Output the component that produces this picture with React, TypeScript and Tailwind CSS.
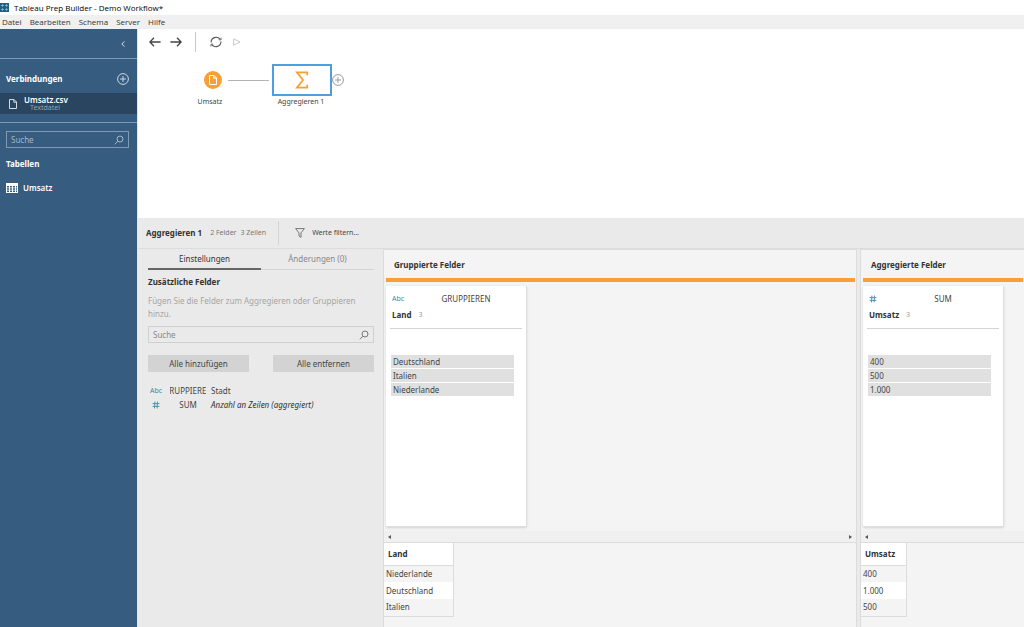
import React from "react";

type FieldPanelProps = {
  title: string;
  field: string;
  kind: "text" | "number";
  mode: string;
  values: string[];
  preview: string[];
  scrollEnd?: boolean;
  tableClass: string;
  className: string;
};

const SearchIcon = ({ className }: { className: string }) => (
  <svg viewBox="0 0 10 10" className={className} fill="none" stroke="currentColor" strokeWidth="1">
    <circle cx="6" cy="4" r="3" />
    <path d="M3.9 6.2 0.8 9.3" />
  </svg>
);

const FileIcon = ({ className }: { className: string }) => (
  <svg viewBox="0 0 8 10" className={className} fill="none" stroke="currentColor" strokeWidth="1">
    <path d="M0.5 0.5h4.5l2.5 2.5v6.5h-7zM4.8 0.5v2.7h2.7" />
  </svg>
);

const PlusCircle = ({ className }: { className: string }) => (
  <svg viewBox="0 0 12 12" className={className} fill="none" stroke="currentColor" strokeWidth="1">
    <circle cx="6" cy="6" r="5.4" />
    <path d="M6 3v6M3 6h6" />
  </svg>
);

const HashIcon = () => (
  <svg viewBox="0 0 8 8" className="size-2 text-[#4f93b0]" fill="none" stroke="currentColor" strokeWidth="1">
    <path d="M2.9 0.6 2.5 7.4M5.5 0.6 5.1 7.4M0.6 2.6h6.8M0.6 5.4h6.8" />
  </svg>
);

const TypeIcon = ({ kind }: { kind: "text" | "number" }) =>
  kind === "text" ? <span className="text-[7px] text-[#3f86a8]">Abc</span> : <HashIcon />;

const LogoIcon = () => (
  <svg viewBox="0 0 9 9" className="size-[9px]">
    <rect width="9" height="9" fill="#1f5f86" />
    <path
      d="M1 2.5h3M2.5 1v3M5 2.5h3M6.5 1v3M1 6.5h3M2.5 5v3M5 6.5h3M6.5 5v3"
      stroke="#8fbdd2"
      strokeWidth="0.7"
    />
  </svg>
);

function TitleBar() {
  return (
    <header className="font-['Open_Sans',sans-serif]">
      <div className="flex h-[15px] items-center gap-[5px] text-[8px] text-black">
        <LogoIcon />
        <span>Tableau Prep Builder - Demo Workflow*</span>
      </div>
      <nav className="flex h-[14px] items-center gap-2 bg-[#f0f0f0] pl-0.5 text-[8px] text-[#333]">
        {["Datei", "Bearbeiten", "Schema", "Server", "Hilfe"].map((item) => (
          <button key={item}>{item}</button>
        ))}
      </nav>
    </header>
  );
}

function Sidebar() {
  return (
    <aside className="w-[137px] shrink-0 bg-[#365c80] text-[8px] text-white">
      <div className="flex h-[30px] items-center justify-end border-b border-[#8199af] pr-3">
        <button aria-label="Einklappen">
          <svg viewBox="0 0 4 6" className="h-1.5 w-1" fill="none" stroke="#dbe4ec">
            <path d="M3.4 0.4 0.8 3l2.6 2.6" />
          </svg>
        </button>
      </div>
      <div className="flex h-[34px] items-center justify-between pt-1.5 pr-2 pl-1.5">
        <h2 className="font-bold">Verbindungen</h2>
        <button aria-label="Verbindung hinzufügen">
          <PlusCircle className="size-3 text-[#c9d6e2]" />
        </button>
      </div>
      <a href="#umsatz-csv" className="flex h-[21px] items-center gap-[7px] bg-[#29455f] pl-[9px]">
        <FileIcon className="h-[10px] w-2 text-[#d3dce5]" />
        <span className="flex flex-col pb-0.5">
          <span className="font-semibold leading-[9px]">Umsatz.csv</span>
          <span className="pl-1.5 text-[7px] leading-[7px] text-[#8fa6bb]">Textdatei</span>
        </span>
      </a>
      <div className="mt-2 border-t border-[#8199af] pt-2 pr-2 pl-1.5">
        <div className="flex h-[17px] items-center border border-[#7f9ab3] px-1">
          <input
            aria-label="Tabellen suchen"
            placeholder="Suche"
            className="min-w-0 flex-1 bg-transparent outline-none placeholder:text-[#a3b6c8]"
          />
          <SearchIcon className="size-[10px] text-[#a3b6c8]" />
        </div>
        <h2 className="mt-2 font-bold leading-4">Tabellen</h2>
        <a href="#umsatz" className="mt-2 flex h-4 items-center gap-[5px] font-semibold">
          <svg viewBox="0 0 12 10" className="h-[10px] w-3">
            <rect width="12" height="10" fill="#fff" />
            <path
              d="M1 3h2v1.4H1zM4 3h2v1.4H4zM7 3h2v1.4H7zM10 3h1v1.4h-1zM1 5.3h2v1.4H1zM4 5.3h2v1.4H4zM7 5.3h2v1.4H7zM10 5.3h1v1.4h-1zM1 7.6h2V9H1zM4 7.6h2V9H4zM7 7.6h2V9H7zM10 7.6h1V9h-1z"
              fill="#365c80"
            />
          </svg>
          Umsatz
        </a>
      </div>
    </aside>
  );
}

function Toolbar() {
  return (
    <div className="flex h-[26px] items-center pl-[11px]">
      <button aria-label="Zurück">
        <svg viewBox="0 0 12 10" className="h-[10px] w-3" fill="none" stroke="#444" strokeWidth="1.3">
          <path d="M5 0.8 0.9 5 5 9.2M1 5h10.6" />
        </svg>
      </button>
      <button aria-label="Vor" className="ml-[9px]">
        <svg viewBox="0 0 12 10" className="h-[10px] w-3" fill="none" stroke="#444" strokeWidth="1.3">
          <path d="M7 0.8 11.1 5 7 9.2M11 5H0.4" />
        </svg>
      </button>
      <span className="ml-[13px] h-5 w-px bg-[#c8c8c8]" />
      <button aria-label="Aktualisieren" className="ml-[14px]">
        <svg viewBox="0 0 12 12" className="size-3" fill="none" stroke="#555" strokeWidth="1.1">
          <path d="M1.1 6.4A5 5 0 0 1 10 3.2M10.9 5.6A5 5 0 0 1 2 8.8" />
          <path d="M11 1.6v2.2H8.8M1 10.4V8.2h2.2" strokeWidth="0.9" />
        </svg>
      </button>
      <button aria-label="Ausführen" className="ml-[11px]">
        <svg viewBox="0 0 8 8" className="size-2" fill="none" stroke="#c8c8c8">
          <path d="M0.7 0.8 7 4 0.7 7.2z" />
        </svg>
      </button>
    </div>
  );
}

// Nodes sit on a free canvas, so they carry their own coordinates.
function FlowCanvas() {
  return (
    <section className="relative h-[189px] shrink-0 bg-white">
      <Toolbar />
      <button
        aria-label="Schritt Umsatz"
        className="absolute top-[42px] left-[66px] flex size-[18px] items-center justify-center rounded-full bg-[#f8a037] text-white"
      >
        <FileIcon className="h-[10px] w-2" />
      </button>
      <span className="absolute top-[67px] left-[52px] w-10 text-center text-[7px] leading-3 text-[#444]">Umsatz</span>
      <span className="absolute top-[51px] left-[90px] h-px w-[41px] bg-[#b4b4b4]" />
      <button
        aria-label="Schritt Aggregieren 1"
        className="absolute top-[35px] left-[134px] flex h-8 w-[60px] items-center justify-center border-2 border-[#4e9fdd]"
      >
        <svg viewBox="0 0 14 18" className="h-[18px] w-[14px]" fill="none" stroke="#f8a037" strokeWidth="1.8">
          <path d="M12.2 4.2V1.4H1.9L8 9l-6.1 7.6h10.3v-2.8" />
        </svg>
      </button>
      <button aria-label="Schritt hinzufügen" className="absolute top-[45px] left-[194px]">
        <PlusCircle className="size-3 text-[#999]" />
      </button>
      <span className="absolute top-[67px] left-[133px] w-[60px] text-center text-[7px] leading-3 text-[#444]">
        Aggregieren 1
      </span>
    </section>
  );
}

function StepHeader() {
  return (
    <div className="flex h-[31px] shrink-0 items-center border-b border-[#dcdcdc] pl-2 text-[7px]">
      <h1 className="text-[8px] font-bold text-[#333]">Aggregieren 1</h1>
      <span className="ml-2 text-[#777]">2 Felder</span>
      <span className="ml-1 text-[#777]">3 Zeilen</span>
      <span className="ml-3 h-6 w-px bg-[#d4d4d4]" />
      <button className="ml-4 flex items-center gap-[7px] text-[#444]">
        <svg viewBox="0 0 10 10" className="size-[10px]" fill="none" stroke="#777">
          <path d="M0.6 0.6h8.8L6 4.9v4.5L4 8V4.9z" />
        </svg>
        Werte filtern...
      </button>
    </div>
  );
}

function SettingsPanel() {
  return (
    <section className="w-[245px] shrink-0 pr-2 pl-[10px] text-[#444]">
      <div className="flex h-[21px] w-[226px]">
        <button className="flex-1 border-b-2 border-[#666] text-[#333]">Einstellungen</button>
        <button className="flex-1 border-b border-[#d4d4d4] text-[#888]">Änderungen (0)</button>
      </div>
      <div className="w-[226px]">
        <h2 className="mt-1 font-bold leading-4 text-[#333]">Zusätzliche Felder</h2>
        <p className="mt-1 leading-[13px] text-[#a5a5a5]">
          Fügen Sie die Felder zum Aggregieren oder Gruppieren hinzu.
        </p>
        <div className="mt-1.5 flex h-[17px] items-center border border-[#d0d0d0] px-1">
          <input
            aria-label="Felder suchen"
            placeholder="Suche"
            className="min-w-0 flex-1 bg-transparent outline-none placeholder:text-[#888]"
          />
          <SearchIcon className="size-[10px] text-[#777]" />
        </div>
        <div className="mt-3 flex justify-between">
          <button className="h-[17px] w-[101px] bg-[#d3d3d3]">Alle hinzufügen</button>
          <button className="h-[17px] w-[101px] bg-[#d3d3d3]">Alle entfernen</button>
        </div>
      </div>
      <ul className="mt-3 leading-[14px]">
        <li className="flex items-center">
          <span className="flex w-4 justify-center">
            <TypeIcon kind="text" />
          </span>
          <span className="ml-1.5 flex w-9 justify-center overflow-hidden whitespace-nowrap">GRUPPIEREN</span>
          <span className="ml-[5px]">Stadt</span>
        </li>
        <li className="flex items-center">
          <span className="flex w-4 justify-center">
            <TypeIcon kind="number" />
          </span>
          <span className="ml-1.5 flex w-9 justify-center">SUM</span>
          <span className="ml-[5px] italic text-[#333]">Anzahl an Zeilen (aggregiert)</span>
        </li>
      </ul>
    </section>
  );
}

function FieldPanel({
  title,
  field,
  kind,
  mode,
  values,
  preview,
  scrollEnd,
  tableClass,
  className,
}: FieldPanelProps) {
  return (
    <section className={`flex flex-col border-t border-l border-[#dcdcdc] bg-[#f4f4f4] text-[#444] ${className}`}>
      <h2 className="flex h-7 items-center pt-px pl-[10px] font-bold text-[#333]">{title}</h2>
      <div className="mr-px ml-0.5 h-1 bg-[#f8a037]" />
      <div className="flex flex-1 flex-col pt-1 pb-1 pl-0.5">
        <article className="w-[141px] flex-1 border-r border-b border-[#dedede] bg-white shadow-sm">
          <div className="mx-1 h-[43px] border-b border-[#d4d4d4] px-0.5 pt-1">
            <div className="grid h-4 grid-cols-[20px_1fr] items-center pt-px">
              <TypeIcon kind={kind} />
              <span className="text-center">{mode}</span>
            </div>
            <h3 className="flex h-[17px] items-center gap-[7px] pt-px font-bold text-[#333]">
              {field}
              <span className="text-[7px] font-normal text-[#999]">3</span>
            </h3>
          </div>
          <ul className="mt-[26px] mr-3 ml-[5px] flex flex-col gap-px">
            {values.map((value) => (
              <li key={value} className="h-[13px] bg-[#e0e0e0] pl-0.5 leading-[13px]">
                {value}
              </li>
            ))}
          </ul>
        </article>
      </div>
      <div className="flex h-3 items-center justify-between border-b border-[#dcdcdc] bg-[#f0f0f0] px-1">
        <svg viewBox="0 0 3 4" className="h-1 w-[3px]" fill="#555">
          <path d="M3 0v4L0 2z" />
        </svg>
        {scrollEnd && (
          <svg viewBox="0 0 3 4" className="h-1 w-[3px]" fill="#555">
            <path d="M0 0v4l3-2z" />
          </svg>
        )}
      </div>
      <div className="h-[84px]">
        <table className={`border-r border-b border-[#dcdcdc] text-left ${tableClass}`}>
          <thead>
            <tr className="h-[22px] border-b border-[#dcdcdc] bg-white">
              <th className="pl-1 font-bold text-[#333]">{field}</th>
            </tr>
          </thead>
          <tbody>
            {preview.map((value) => (
              <tr key={value} className="h-[17px] even:bg-white">
                <td className="pl-0.5">{value}</td>
              </tr>
            ))}
          </tbody>
        </table>
      </div>
    </section>
  );
}

export default function App() {
  return (
    <div className="flex h-screen flex-col overflow-hidden bg-white font-['Noto_Sans',sans-serif] leading-3">
      <TitleBar />
      <div className="flex min-h-0 flex-1">
        <Sidebar />
        <main className="flex min-w-0 flex-1 flex-col border-l border-[#e4e4e4] bg-[#eaeaea] text-[8px]">
          <FlowCanvas />
          <StepHeader />
          <div className="flex min-h-0 flex-1">
            <SettingsPanel />
            <FieldPanel
              title="Gruppierte Felder"
              field="Land"
              kind="text"
              mode="GRUPPIEREN"
              values={["Deutschland", "Italien", "Niederlande"]}
              preview={["Niederlande", "Deutschland", "Italien"]}
              scrollEnd
              tableClass="w-[70px]"
              className="min-w-0 flex-1 border-r"
            />
            <FieldPanel
              title="Aggregierte Felder"
              field="Umsatz"
              kind="number"
              mode="SUM"
              values={["400", "500", "1.000"]}
              preview={["400", "1.000", "500"]}
              tableClass="w-[46px]"
              className="ml-[3px] w-[164px] shrink-0"
            />
          </div>
        </main>
      </div>
    </div>
  );
}
